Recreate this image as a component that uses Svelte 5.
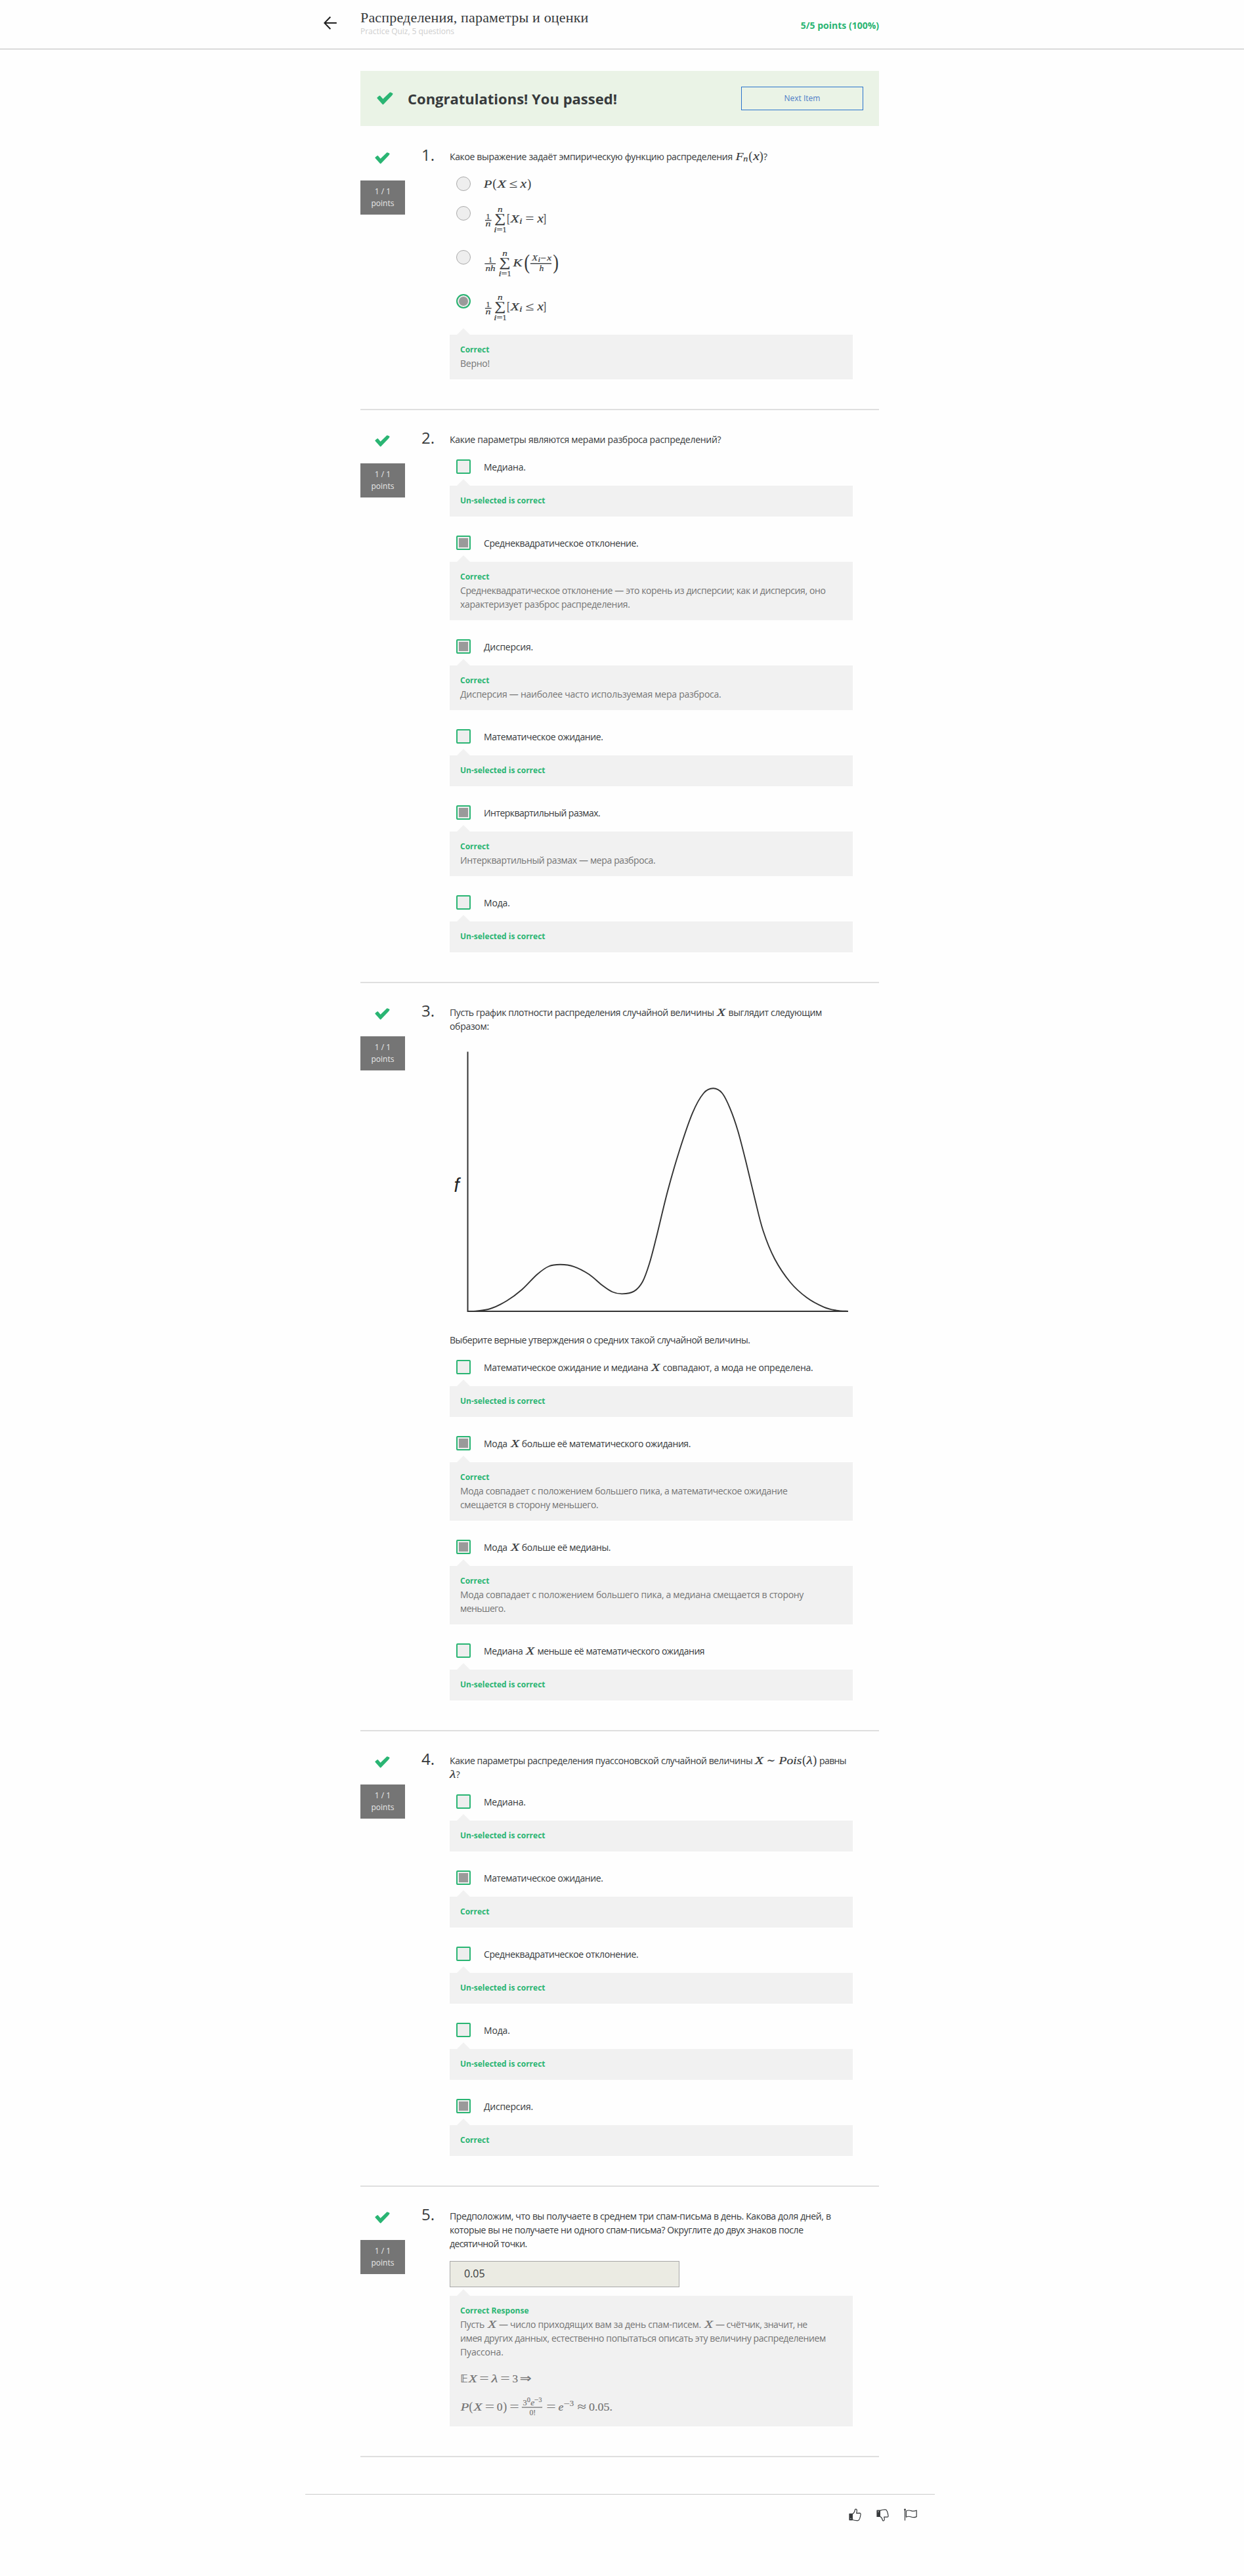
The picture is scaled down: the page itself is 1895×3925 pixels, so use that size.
<script>
  // Formula glyphs: [text, x, baseline, font size, advance width, upright, alternate face]
  const sumParts = (dx, dy) => [
    ['n', 21 + dx, 8.8 + dy, 12.5, 7.6],
    ['∑', 16.2 + dx, 24.6 + dy, 19.5, 17, 1],
    ['i', 15.2 + dx, 39.7 + dy, 12.5, 4.2],
    ['=', 19.4 + dx, 39.7 + dy, 12, 9, 1],
    ['1', 28.4 + dx, 39.7 + dy, 12.5, 6, 1]
  ];
  const indicator = (sign) => ({
    w: 96, h: 44,
    g: [
      ['1', 3.4, 19.7, 12.5, 6, 1], ['n', 2.6, 30.8, 12.5, 8],
      ...sumParts(0, 0),
      ['[', 35.2, 24.8, 18, 4.4, 1], ['X', 40.4, 24.7, 17.5, 13.4], ['i', 54, 27, 12.5, 4.6],
      [sign, 63.6, 25.2, 18, 12.8, 1], ['x', 81.4, 24.7, 18, 9.4], [']', 90.4, 24.8, 18, 4.4, 1]
    ],
    r: [[2, 21.2, 9.6]]
  });
  const formulas = {
    X: { w: 22, h: 21, g: [['X', 5, 16, 17.5, 13.2]] },
    Fn: { w: 47.2, h: 21, g: [['F', 4.8, 15.6, 17.5, 11.8], ['n', 16.2, 17.8, 12.5, 7], ['(', 24.4, 15.6, 18, 5.6, 1], ['x', 31.2, 15.6, 18, 9.6], [')', 41, 15.6, 18, 5.6, 1]] },
    pois: { w: 101.6, h: 21, g: [['X', 3.8, 16, 17.5, 13.4], ['∼', 21.8, 16, 17, 13.4, 1], ['Pois', 40.4, 16, 17.5, 35], ['(', 76.2, 16, 18, 5.6, 1], ['λ', 82.6, 16, 17.5, 9.4], [')', 92.4, 16, 18, 5.6, 1]] },
    lambda: { w: 9.8, h: 21, g: [['λ', 0, 16, 17.5, 9.4]] },
    cdf: { w: 75, h: 22, g: [['P', 0, 17, 17.5, 12.4], ['(', 13.4, 17, 18, 5.6, 1], ['X', 20.6, 17, 17.5, 13.6], ['≤', 38.8, 17.4, 18, 12.4, 1], ['x', 55.4, 17, 18, 9.6], [')', 66.4, 17, 18, 5.6, 1]] },
    eq: indicator('='),
    leq: indicator('≤'),
    kernel: {
      w: 116, h: 44,
      g: [
        ['1', 7, 19.3, 12.5, 6, 1], ['nh', 2.6, 31.6, 12.5, 15],
        ...sumParts(7.2, 0),
        ['K', 44.6, 24.6, 17.5, 14],
        ['(', 61.4, 28.6, 32, 8.4, 1], ['X', 73.2, 16, 12.5, 8.8], ['i', 82.4, 17.6, 9.5, 3.6], ['−', 86.6, 16, 12, 8.6, 1], ['x', 96.2, 16, 12.5, 6.8],
        ['h', 84.4, 31.6, 12.5, 6.8], [')', 105.6, 28.6, 32, 8.4, 1]
      ],
      r: [[1.6, 20.2, 16.4], [71, 20, 32]]
    },
    solution: {
      w: 260, h: 89,
      g: [
        ['𝔼', 0.3, 36, 16, 11.4, 1, 1], ['X', 12.8, 36, 17.5, 13], ['=', 29.6, 36, 18, 14, 1], ['λ', 47.6, 36, 17.5, 10], ['=', 61.4, 36, 18, 14, 1], ['3', 79.4, 36, 17.5, 8.6, 1], ['⇒', 90.8, 36, 18, 18, 1, 1],
        ['P', 0.8, 79, 17.5, 12.6], ['(', 13.6, 79, 18, 5.6, 1], ['X', 20.6, 79, 17.5, 13], ['=', 38, 79, 18, 14, 1], ['0', 55.8, 79, 17.5, 8.8, 1], [')', 65.6, 79, 18, 5.6, 1], ['=', 75.4, 79, 18, 14, 1],
        ['3', 95.6, 71.3, 12.5, 6.2, 1], ['0', 101.8, 66, 10, 5.2, 1], ['e', 107.2, 71.3, 12.5, 6], ['−', 113, 66.4, 10, 6.4, 1], ['3', 119.4, 66.3, 10, 5, 1],
        ['0!', 105.4, 86, 12.5, 9.8, 1],
        ['=', 131.6, 79, 18, 14, 1], ['e', 149.6, 79, 17.5, 7.8], ['−', 157.6, 72.6, 12.5, 9, 1], ['3', 166.8, 71.7, 12.5, 6.4, 1], ['≈', 178.6, 79, 18, 13.6, 1], ['0.05.', 196, 79, 17.5, 36, 1]
      ],
      r: [[94, 73.5, 31]]
    }
  };

  const t = (text, ls = -0.35) => ({ text, ls });
  const m = (f) => ({ f });
  const unselected = { title: 'Un-selected is correct', lines: [] };
  const correct = (...lines) => ({ title: 'Correct', lines });

  const questions = [
    {
      n: 1,
      prompt: [[t('Какое выражение задаёт эмпирическую функцию распределения'), m('Fn'), t('?')]],
      options: [
        { radio: true, line: [m('cdf')] },
        { radio: true, line: [m('eq')] },
        { radio: true, line: [m('kernel')] },
        { radio: true, on: true, line: [m('leq')], note: correct([t('Верно!', -0.24)]) }
      ]
    },
    {
      n: 2,
      prompt: [[t('Какие параметры являются мерами разброса распределений?', -0.28)]],
      options: [
        { line: [t('Медиана.', -0.22)], note: unselected },
        {
          on: true, line: [t('Среднеквадратическое отклонение.', -0.39)],
          note: correct(
            [t('Среднеквадратическое отклонение — это корень из дисперсии; как и дисперсия, оно', -0.39)],
            [t('характеризует разброс распределения.', -0.33)])
        },
        { on: true, line: [t('Дисперсия.', -0.25)], note: correct([t('Дисперсия — наиболее часто используемая мера разброса.', -0.25)]) },
        { line: [t('Математическое ожидание.', -0.41)], note: unselected },
        { on: true, line: [t('Интерквартильный размах.', -0.54)], note: correct([t('Интерквартильный размах — мера разброса.', -0.38)]) },
        { line: [t('Мода.', -0.15)], note: unselected }
      ]
    },
    {
      n: 3,
      prompt: [
        [t('Пусть график плотности распределения случайной величины', -0.41), m('X'), t('выглядит следующим', -0.35)],
        [t('образом:', -0.3)]
      ],
      graph: true,
      after: [t('Выберите верные утверждения о средних такой случайной величины.', -0.44)],
      options: [
        { line: [t('Математическое ожидание и медиана', -0.39), m('X'), t('совпадают, а мода не определена.', -0.23)], note: unselected },
        {
          on: true, line: [t('Мода', -0.25), m('X'), t('больше её математического ожидания.', -0.42)],
          note: correct(
            [t('Мода совпадает с положением большего пика, а математическое ожидание', -0.37)],
            [t('смещается в сторону меньшего.', -0.38)])
        },
        {
          on: true, line: [t('Мода', -0.25), m('X'), t('больше её медианы.', -0.4)],
          note: correct(
            [t('Мода совпадает с положением большего пика, а медиана смещается в сторону', -0.31)],
            [t('меньшего.', -0.54)])
        },
        { line: [t('Медиана', -0.34), m('X'), t('меньше её математического ожидания', -0.46)], note: unselected }
      ]
    },
    {
      n: 4,
      prompt: [
        [t('Какие параметры распределения пуассоновской случайной величины', -0.39), m('pois'), t('равны', -0.6)],
        [m('lambda'), t('?')]
      ],
      options: [
        { line: [t('Медиана.', -0.22)], note: unselected },
        { on: true, line: [t('Математическое ожидание.', -0.41)], note: correct() },
        { line: [t('Среднеквадратическое отклонение.', -0.39)], note: unselected },
        { line: [t('Мода.', -0.15)], note: unselected },
        { on: true, line: [t('Дисперсия.', -0.25)], note: correct() }
      ]
    },
    {
      n: 5,
      prompt: [
        [t('Предположим, что вы получаете в среднем три спам-письма в день. Какова доля дней, в', -0.36)],
        [t('которые вы не получаете ни одного спам-письма? Округлите до двух знаков после', -0.4)],
        [t('десятичной точки.', -0.58)]
      ],
      answer: '0.05',
      note: {
        title: 'Correct Response',
        lines: [
          [t('Пусть'), m('X'), t('— число приходящих вам за день спам-писем.', -0.3), m('X'), t('— счётчик, значит, не', -0.52)],
          [t('имея других данных, естественно попытаться описать эту величину распределением', -0.39)],
          [t('Пуассона.', -0.16)]
        ],
        formula: 'solution'
      }
    }
  ];

  // Density curve, smoothed through its control points
  const pts = [
    [30, 424], [40, 423.6], [62, 420], [87, 408], [110, 391], [133, 368], [151, 355.5], [168.8, 352.8], [189, 355.8], [212, 367.5], [232.6, 384.5],
    [248, 394.5], [263, 397.4], [281, 393.4], [293.8, 379], [304, 352], [314, 314.6], [332, 241], [350, 179], [370, 121.7], [387, 91.5],
    [401.5, 84.2], [415, 91.5], [427, 114.6], [439, 149], [452, 199], [464.7, 252], [477.4, 301], [495, 344], [519, 380], [543.8, 403], [570, 417.6], [589, 422.6], [607, 424]
  ];
  const curve = pts.slice(0, -1).reduce((d, p, i) => {
    const a = pts[Math.max(i - 1, 0)], b = pts[i + 1], c = pts[Math.min(i + 2, pts.length - 1)];
    return `${d} C${p[0] + (b[0] - a[0]) / 6} ${p[1] + (b[1] - a[1]) / 6} ${b[0] - (c[0] - p[0]) / 6} ${b[1] - (c[1] - p[1]) / 6} ${b[0]} ${b[1]}`;
  }, `M${pts[0][0]} ${pts[0][1]}`);
</script>

{#snippet math(name)}
  {@const f = formulas[name]}
  <svg class="math" width={f.w} height={f.h} viewBox="0 0 {f.w} {f.h}">
    {#each f.g as g}
      <text class:upright={g[5]} class:alt={g[6]} x={g[1]} y={g[2]} font-size={g[3]} textLength={g[4]} lengthAdjust="spacingAndGlyphs">{g[0]}</text>
    {/each}
    {#each f.r ?? [] as r}
      <rect x={r[0]} y={r[1]} width={r[2]} height="1.1" />
    {/each}
  </svg>
{/snippet}

{#snippet line(parts)}
  <div class="line">
    {#each parts as p}
      {#if p.f}{@render math(p.f)}{:else}<span style:letter-spacing="{p.ls}px">{p.text}</span>{/if}
    {/each}
  </div>
{/snippet}

{#snippet check(w, h)}
  <svg class="check" width={w} height={h} viewBox="0 0 23 18">
    <path d="M.8 7.4 3.6 5.2Q4.4 4.8 5 5.5L8.6 9.8 18.2.6Q18.8.1 19.5.4L22 1.6Q22.8 2.1 22.4 3.1 21.9 4.2 20.8 5.3L9.3 17.2Q8.5 18 7.8 17.1L.6 9Q0 8.1.8 7.4Z" fill="#2ab573" />
  </svg>
{/snippet}

{#snippet feedback(note)}
  <div class="feedback">
    <div class="feedback-title">{note.title}</div>
    {#each note.lines as l}{@render line(l)}{/each}
    {#if note.formula}{@render math(note.formula)}{/if}
  </div>
{/snippet}

<header>
  <div class="bar">
    <svg class="back" width="20" height="20" viewBox="0 0 20 20"><path d="M10.3.8 1.4 10l8.9 9.2M1.6 10H19.8" /></svg>
    <div class="titles">
      <h1>Распределения, параметры и оценки</h1>
      <p>Practice Quiz, 5 questions</p>
    </div>
    <strong>5/5 points (100%)</strong>
  </div>
</header>

<main>
  <div class="banner">
    {@render check(25, 20)}
    <h2>Congratulations! You passed!</h2>
    <button>Next Item</button>
  </div>

  {#each questions as q}
    <section>
      <aside>
        {@render check(23, 18)}
        <div class="score"><span>1 / 1</span><span>points</span></div>
      </aside>
      <div class="number">{q.n}.</div>
      <div class="content">
        <div class="prompt">
          {#each q.prompt as l}{@render line(l)}{/each}
          {#if q.graph}
            <svg class="graph" width="614" height="457" viewBox="0 0 614 457">
              <path d="M27.5 28.5V424H607" stroke-width="2" />
              <path d={curve} stroke-width="1.9" />
              <text x="6.5" y="242.4">f</text>
            </svg>
            {@render line(q.after)}
          {/if}
        </div>
        {#if q.options}
          <div class="options">
            {#each q.options as o}
              <div class="option" class:noted={o.note}>
                <label>
                  <i class="box" class:radio={o.radio} class:on={o.on} class:good={o.on || !o.radio}></i>
                  {@render line(o.line)}
                </label>
                {#if o.note}{@render feedback(o.note)}{/if}
              </div>
            {/each}
          </div>
        {:else}
          <div class="answer">{q.answer}</div>
          {@render feedback(q.note)}
        {/if}
      </div>
    </section>
  {/each}
</main>

<footer>
  <svg width="20" height="20" viewBox="0 0 20 20">
    <path d="M1 8.3H5.4V17.6H1Z" fill="#373a3c" />
    <path d="M5.5 8.6Q8.6 7 9.4 2.2 9.7.8 11 1.1 12.6 1.6 12.3 4.4L11.7 7.3 16.6 7.2Q18.3 7.4 18 9 18.3 10.4 17.5 11.3 17.9 12.9 16.9 13.9 17.1 15.6 16 16.4 15.7 18.3 13.8 18.6 9.2 18.9 5.5 17.3" />
    <circle cx="3" cy="15.6" r=".7" fill="#fff" stroke="none" />
  </svg>
  <svg width="20" height="20" viewBox="0 0 20 20">
    <path d="M1 3.2H5.4V12.4H1Z" fill="#373a3c" />
    <path d="M5.5 12.2Q8.6 13.6 9.4 17.8 9.7 19.2 11 18.9 12.6 18.4 12.3 15.9L11.7 13 16.6 13.1Q18.3 12.9 18 11.4 18.3 10 17.5 9.1 17.9 7.5 16.9 6.5 17.1 4.8 16 4 15.7 2.1 13.8 1.9 9.2 1.6 5.5 3.4" />
    <circle cx="3" cy="5" r=".7" fill="#fff" stroke="none" />
  </svg>
  <svg width="21" height="20" viewBox="0 0 21 20">
    <path d="M1.5 1.6V18.6M3.4 4Q7 2.2 11 3.6 15 5 19.2 3V12.6Q15 14.6 11 13 7 11.4 3.4 13.2Z" />
    <circle cx="1.5" cy="2" r=".8" fill="#373a3c" />
  </svg>
</footer>

<style>
  :global(body) { background: #fefefe; color: #373a3c; font-family: "Open Sans", "Noto Sans", sans-serif; font-size: 14px; line-height: 21px; }
  h1, h2, p { margin: 0; }
  svg { display: block; flex: none; }

  header { height: 74px; border-bottom: 1px solid #cbcbcb; box-shadow: 0 1px 0 #eaeaea; }
  .bar { width: 846px; margin: 0 0 0 493px; display: flex; align-items: flex-start; }
  .back { margin: 25px 36px 0 0; fill: none; stroke: #1f1f1f; stroke-width: 2; }
  .titles { flex: 1; padding-top: 14px; }
  h1 { font: 400 22px/26px "Liberation Serif", serif; letter-spacing: 0.18px; color: #373a3c; }
  p { font-size: 12px; line-height: 18px; letter-spacing: -0.03px; color: #cfcfcf; margin-top: -1px; }
  strong { font-size: 14px; font-weight: 700; color: #2ab573; margin-top: 28px; line-height: 21px; }

  main { width: 790px; margin: 33px 0 0 549px; }
  .banner { display: flex; align-items: center; box-sizing: border-box; height: 84px; padding: 0 24px 0 25px; margin-bottom: 2px; background: #eaf3e6; }
  h2 { flex: 1; margin-left: 22px; font-size: 22px; line-height: 30px; font-weight: 700; }
  button { box-sizing: border-box; width: 186px; height: 36px; padding: 0; border: 1px solid #2a73cc; background: none; color: #4d7cc7; font: 400 12px/18px "Open Sans", sans-serif; }

  section { display: flex; align-items: flex-start; padding: 34px 0 45px; border-bottom: 2px solid #dfdfdf; }
  aside { width: 68px; flex: none; }
  aside .check { margin: 4px auto 25px 22px; }
  .score { box-sizing: border-box; height: 52px; padding: 8px 0; display: flex; flex-direction: column; align-items: center; background: #757575; color: #e8e8e8; font-size: 12px; line-height: 18px; }
  .number { width: 43px; margin-left: 25px; flex: none; font-size: 24px; line-height: 32px; margin-top: -8px; }
  .content { width: 614px; }

  .line { display: flex; white-space: pre; min-height: 21px; }
  .math { overflow: visible; fill: currentColor; stroke: currentColor; stroke-width: 0.2; font-family: "Liberation Serif", "DejaVu Serif", serif; font-style: italic; }
  .math .upright { font-style: normal; }
  .math .alt { font-family: "DejaVu Sans", sans-serif; }
  .graph { fill: none; stroke: #333; }
  .graph text { font: italic 400 29px "Liberation Sans", sans-serif; fill: #222; stroke: none; }

  .options { display: flex; flex-direction: column; gap: 23px; margin-top: 20px; }
  .noted + .option { margin-top: 6px; }
  label { display: flex; gap: 20px; padding-left: 10px; }
  label .line { padding-top: 1px; }
  label .line:has(> .math:only-child) { padding-top: 0; }
  .box { box-sizing: border-box; width: 22px; height: 22px; flex: none; border: 1px solid #aaa; border-radius: 2px; background: #eee; }
  .radio { border-radius: 50%; }
  .good { border: 2px solid #2ab573; }
  .on { background: #9a9a9a; box-shadow: inset 0 0 0 2px #eee; }

  .feedback { position: relative; box-sizing: border-box; width: 614px; padding: 12px 16px 14px; background: #f1f1f1; color: #757575; }
  label + .feedback { margin-top: 18px; }
  .feedback::before { content: ""; position: absolute; left: 11px; top: -10px; border: solid transparent; border-width: 0 10px 10px; border-bottom-color: #f1f1f1; }
  .feedback-title { font-size: 12px; font-weight: 700; color: #2ab573; line-height: 21px; }

  .answer { box-sizing: border-box; width: 350px; height: 40px; margin: 16px 0 13px; padding: 0 21px; border: 1px solid #a8a8a8; background: #ebebe3; font-size: 16px; line-height: 37px; }

  footer { box-sizing: border-box; width: 959px; height: 125px; margin: 56px 0 0 465px; padding: 21px 26px 0 0; border-top: 1px solid #ccc; display: flex; justify-content: flex-end; gap: 22px; fill: none; stroke: #373a3c; stroke-width: 1.2; stroke-linejoin: round; }
</style>
